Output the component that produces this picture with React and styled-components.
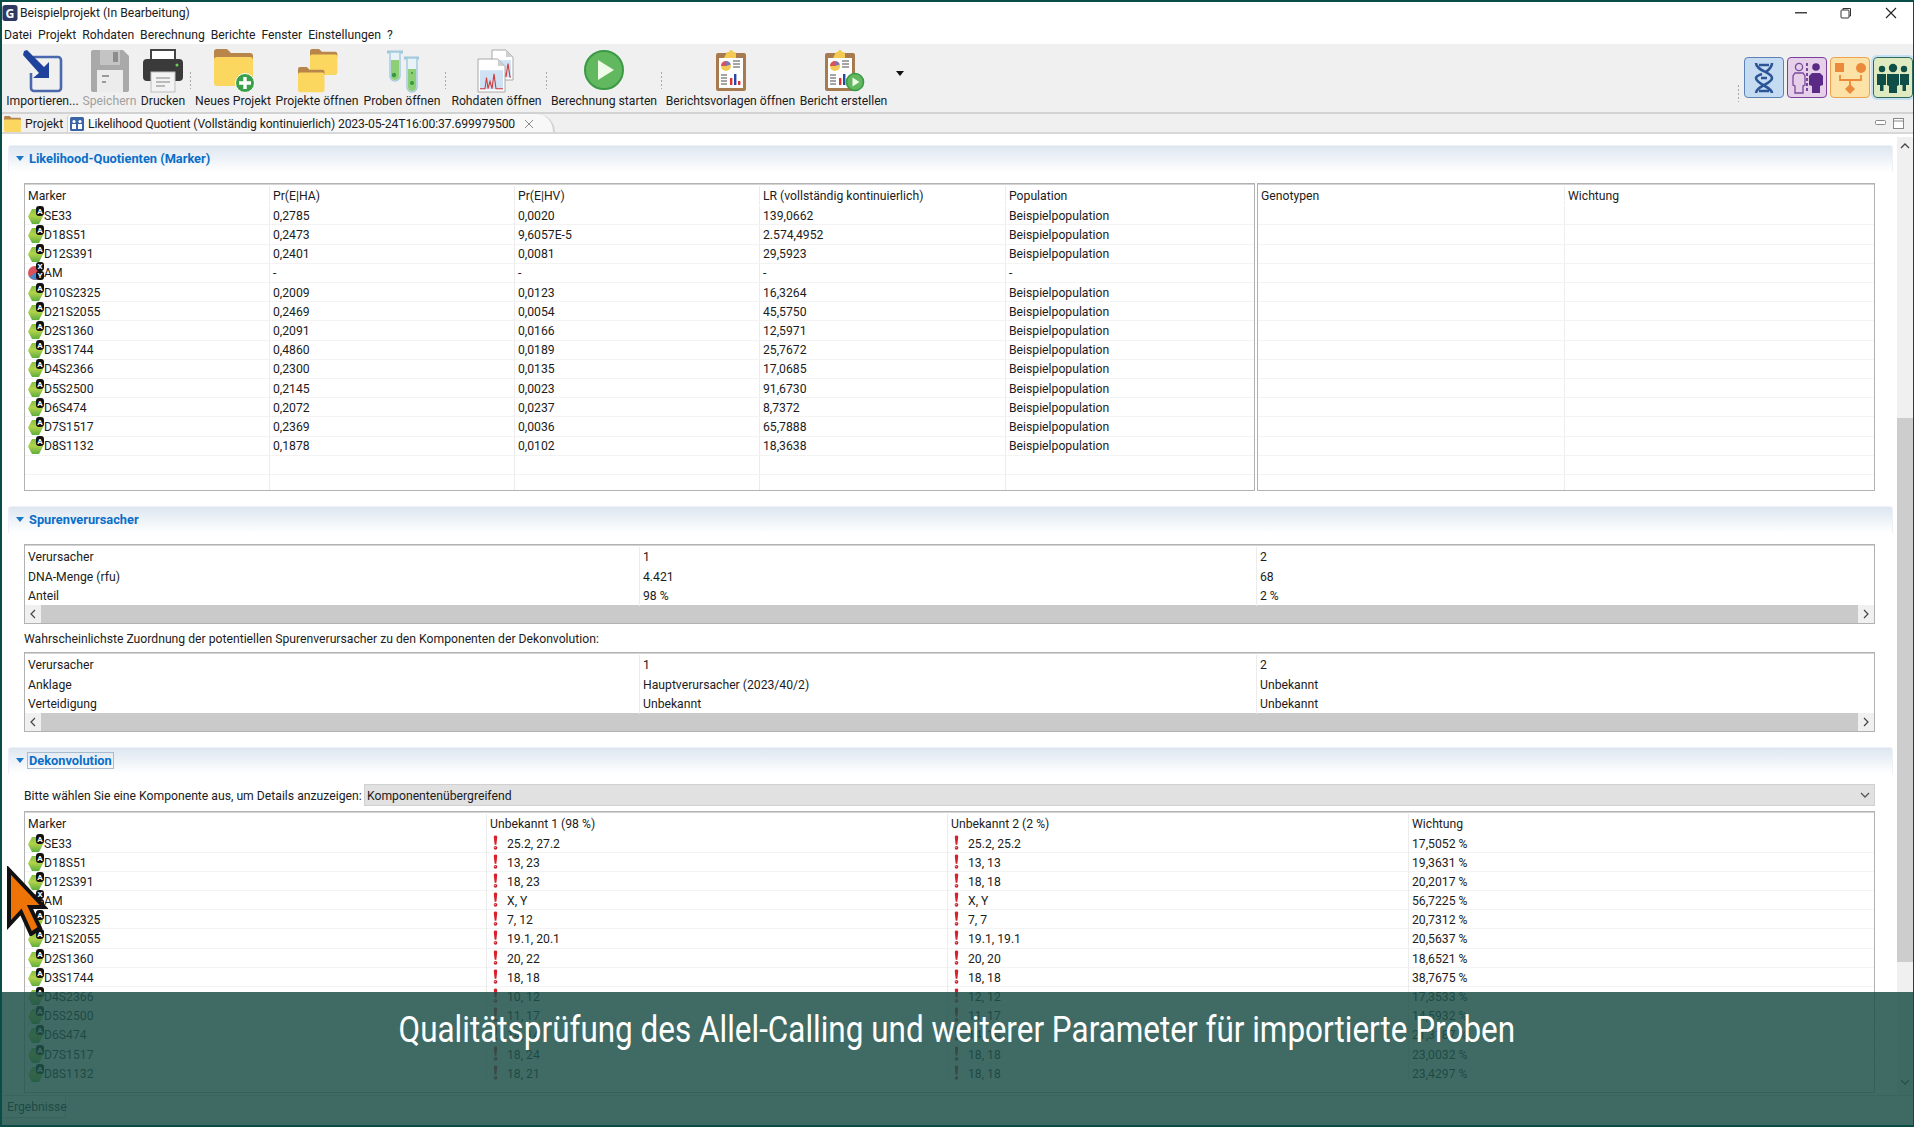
import React from "react";
import styled, { createGlobalStyle } from "styled-components";

const Global = createGlobalStyle`
  html, body { margin: 0; padding: 0; width: 1914px; height: 1127px; overflow: hidden; background: #fff; }
  #root { width: 1914px; height: 1127px; }
  * { box-sizing: border-box; }
`;

const Window = styled.div`
  position: relative;
  width: 1914px;
  height: 1127px;
  display: flex;
  flex-direction: column;
  border: solid #0a4d47;
  border-width: 2px 1px 2px 2px;
  font-family: Roboto, "Noto Sans", sans-serif;
  font-size: 12.2px;
  color: #1c1c1c;
  background: #fff;
  overflow: hidden;
`;

const TitleBar = styled.div`
  height: 22px;
  display: flex;
  align-items: center;
  gap: 2px;
  background: #fff;
`;

const TitleText = styled.span`
  flex: 1;
`;

const WinControls = styled.div`
  display: flex;
`;

const WinButton = styled.div`
  width: 45px;
  height: 22px;
  display: flex;
  align-items: center;
  justify-content: center;
`;

const MenuBar = styled.div`
  height: 20px;
  display: flex;
  align-items: center;
  gap: 6px;
  padding: 2px 0 0 2px;
`;

const Toolbar = styled.div`
  height: 68px;
  display: flex;
  padding-left: 2px;
  background: #f0f0f0;
`;

const ToolItem = styled.div`
  width: ${(p) => p.$w}px;
  display: flex;
  flex-direction: column;
  align-items: center;
  padding-top: 5px;
  white-space: nowrap;
  color: ${(p) => (p.$disabled ? "#a0a0a0" : "#1c1c1c")};
`;

const ToolIcon = styled.svg`
  width: 44px;
  height: 44px;
  margin-bottom: 1px;
`;

const Dots = styled.div`
  width: ${(p) => p.$w || 5}px;
  margin-top: 27px;
  height: 18px;
  background-image: radial-gradient(circle, #a8a8a8 0.9px, transparent 1.1px);
  background-size: 5px 4px;
  background-repeat: repeat-y;
`;

const DropArrow = styled.div`
  margin: 27px 0 0 6px;
  width: 0;
  height: 0;
  border-left: 4px solid transparent;
  border-right: 4px solid transparent;
  border-top: 5px solid #111;
`;

const Perspectives = styled.div`
  margin-left: auto;
  display: flex;
  align-items: flex-start;
  gap: 3px;
  padding-top: 13px;
`;

const PerspectiveButton = styled.div`
  width: 40px;
  height: 41px;
  border-radius: 4px;
  background: ${(p) => p.$bg};
  border: 1.5px solid ${(p) => p.$line};
  outline: ${(p) => (p.$active ? "2px solid #c5dff2" : "none")};
  display: flex;
  align-items: center;
  justify-content: center;
`;

const TabRow = styled.div`
  height: 22px;
  display: flex;
  align-items: stretch;
  background: #f0f0f0;
  border-top: 2px solid #d2d2d2;
  border-bottom: 2px solid #d8d8d8;
  white-space: nowrap;
`;

const PlainTab = styled.div`
  display: flex;
  align-items: center;
  gap: 4px;
  padding: 2px 4px 0 2px;
  width: 65px;
`;

const ActiveTab = styled.div`
  display: flex;
  align-items: center;
  gap: 4px;
  width: 488px;
  padding: 2px 0 0 2px;
  letter-spacing: -0.12px;
  background: #f8f8f8;
  border-left: 1px solid #d2d2d2;
  border-right: 2px solid #d2d2d2;
  border-radius: 5px 20px 0 0;
`;

const TabClose = styled.span`
  margin-left: 5px;
  display: flex;
`;

const TabTools = styled.div`
  margin-left: auto;
  display: flex;
  align-items: center;
  gap: 7px;
  padding-right: 9px;
`;

const Body = styled.div`
  flex: 1;
  min-height: 0;
  display: flex;
`;

const Content = styled.div`
  flex: 1;
  min-width: 0;
  padding: 11px 4px 0 6px;
  overflow: hidden;
`;

const MainScroll = styled.div`
  width: 16px;
  display: flex;
  flex-direction: column;
  background: #f0f0f0;
  margin-top: 3px;
`;

const ScrollEnd = styled.div`
  height: 16px;
  display: flex;
  align-items: center;
  justify-content: center;
`;

const ScrollGap = styled.div`
  height: ${(p) => p.$h}px;
`;

const ScrollThumb = styled.div`
  height: ${(p) => p.$h}px;
  background: #cdcdcd;
`;

const Section = styled.section`
  margin-bottom: 15px;
`;

const SectionHeader = styled.div`
  height: 27px;
  display: flex;
  align-items: center;
  gap: 3px;
  padding: 0 0 2px 7px;
  border: 1px solid #eef2f6;
  border-bottom: none;
  border-radius: 3px 3px 0 0;
  background: linear-gradient(#dde6f0, #fff);
`;

const Twistie = styled.div`
  width: 0;
  height: 0;
  border-left: 4px solid transparent;
  border-right: 4px solid transparent;
  border-top: 5px solid #1a78c8;
`;

const SectionTitle = styled.span`
  font-size: 12.8px;
  font-weight: 700;
  color: #0a6ec8;
  padding: 0 1px;
  border: 1px solid ${(p) => (p.$focused ? "#a9bccd" : "transparent")};
`;

const SectionBody = styled.div`
  margin: ${(p) => p.$top}px 18px 0 16px;
`;

const SplitTables = styled.div`
  display: flex;
  gap: 2px;
`;

const Table = styled.div`
  flex: ${(p) => p.$flex || "none"};
  width: ${(p) => (p.$w ? `${p.$w}px` : "auto")};
  height: ${(p) => p.$h}px;
  border: 1px solid #b2b2b2;
  box-shadow: inset 0 1px #d4d4d4;
  padding-top: 2px;
  overflow: hidden;
`;

const Row = styled.div`
  display: grid;
  grid-template-columns: ${(p) => p.$cols};
  height: ${(p) => p.$h || 19.2}px;
  padding-bottom: ${(p) => p.$pad || 0}px;
  border-bottom: ${(p) => (p.$h ? "none" : "1px solid #f3f3f3")};
`;

const Cell = styled.div`
  display: flex;
  align-items: center;
  padding: 1px 0 0 3px;
  border-right: 1px solid #ececec;
  white-space: nowrap;
  line-height: 16px;
  &:last-child { border-right: none; }
`;

const HScroll = styled.div`
  height: 19px;
  margin-top: -1px;
  display: flex;
  background: #cacaca;
`;

const HScrollEnd = styled.div`
  width: 16px;
  display: flex;
  align-items: center;
  justify-content: center;
  background: #f0f0f0;
`;

const HScrollThumb = styled.div`
  flex: 1;
`;

const Note = styled.div`
  margin: 6px 0 3px;
  height: 19px;
  line-height: 19px;
`;

const PickerRow = styled.div`
  display: flex;
  align-items: center;
  height: 22px;
  margin-bottom: 5px;
`;

const PickerLabel = styled.span`
  width: 340px;
  padding-top: 1px;
  white-space: nowrap;
`;

const Picker = styled.div`
  flex: 1;
  height: 22px;
  display: flex;
  align-items: center;
  justify-content: space-between;
  padding: 1px 4px 0 2px;
  background: #e1e1e1;
  border: 1px solid #d0d0d0;
`;

const BottomTabs = styled.div`
  height: 30px;
  border-top: 1px solid #d4d4d4;
  background: #f4f4f4;
`;

const BottomTab = styled.div`
  width: 64px;
  height: 22px;
  display: flex;
  align-items: center;
  padding-left: 5px;
  background: #fff;
  border-right: 1px solid #d0d0d0;
  border-bottom: 1px solid #d0d0d0;
  border-radius: 0 0 3px 0;
  white-space: nowrap;
`;

const Caption = styled.div`
  position: absolute;
  left: -2px;
  right: -1px;
  top: 990px;
  bottom: -2px;
  padding-top: 15px;
  background: rgba(30, 81, 74, 0.85);
  display: flex;
  justify-content: center;
`;

const CaptionText = styled.span`
  font-family: Roboto, "Noto Sans", sans-serif;
  font-size: 37px;
  line-height: 46px;
  color: #fff;
  white-space: nowrap;
  transform: scaleX(0.85);
  transform-origin: center top;
`;

const Cursor = styled.svg`
  position: absolute;
  left: 4px;
  top: 864px;
  width: 42px;
  height: 70px;
`;

const Exclaim = styled.svg`
  width: 7px;
  height: 16px;
  margin: 0 8px 2px 2px;
  flex: none;
`;

const MarkerSvg = styled.svg`
  width: 16px;
  height: 16px;
  flex: none;
  overflow: visible;
`;

const TabGlyph = styled.svg`
  flex: none;
`;

const ChevDown = () => (
  <svg width="10" height="7" viewBox="0 0 10 7"><path d="M1 1l4 4 4-4" fill="none" stroke="#555" strokeWidth="1.3" /></svg>
);
const ChevUp = () => (
  <svg width="10" height="7" viewBox="0 0 10 7"><path d="M1 6l4-4 4 4" fill="none" stroke="#444" strokeWidth="1.3" /></svg>
);
const ChevSide = ({ right }) => (
  <svg width="6" height="10" viewBox="0 0 6 10"><path d={right ? "M1 1l4 4-4 4" : "M5 1L1 5l4 4"} fill="none" stroke="#444" strokeWidth="1.2" /></svg>
);

const AppIcon = () => (
  <svg width="16" height="18" viewBox="0 0 17 18">
    <rect x="0.5" y="0.5" width="16" height="17" rx="3" fill="#2e3a63" />
    <text x="8.5" y="14" textAnchor="middle" fontSize="13" fontWeight="700" fill="#fff" fontFamily="Noto Sans">G</text>
  </svg>
);

const Badge = ({ y, h = 10, children }) => (
  <g>
    <rect x="8" y={y} width="8" height={h} rx="3" fill="#111" />
    <text x="12" y={y + h - 2} textAnchor="middle" fontSize="8" fontWeight="700" fill="#fff" fontFamily="Roboto">{children}</text>
  </g>
);

const MarkerIcon = ({ kind }) => (
  <MarkerSvg viewBox="0 0 16 16">
    <defs>
      <linearGradient id="mk" x1="0" y1="0" x2="0" y2="1">
        <stop offset="0" stopColor="#86bf3f" />
        <stop offset="0.45" stopColor="#b2d34a" />
        <stop offset="1" stopColor="#5fae3e" />
      </linearGradient>
    </defs>
    {kind === "xy" ? (
      <>
        <circle cx="7" cy="8" r="7" fill="#d9525a" />
        <path d="M1.5 12a7 7 0 0 0 11 0L7 8z" fill="#4a86cc" />
        <Badge y={-3} h={9}>X</Badge>
        <Badge y={6} h={9}>Y</Badge>
      </>
    ) : (
      <>
        <path d="M4 1h7l4 7.5-4 7.5H4L0 8.5z" fill="url(#mk)" />
        <Badge y={-2}>A</Badge>
      </>
    )}
  </MarkerSvg>
);

const Alert = () => (
  <Exclaim viewBox="0 0 8 17">
    <path d="M2 1.5a2 1.5 0 0 1 4 0L5 10.5H3z" fill="#d9202c" />
    <circle cx="4" cy="14" r="2.1" fill="#c9202c" />
    <circle cx="3.6" cy="13.6" r="0.8" fill="#eaa" />
  </Exclaim>
);

const ImportIcon = () => (
  <ToolIcon viewBox="0 0 44 44">
    <path d="M12 8h25a3 3 0 0 1 3 3v28a3 3 0 0 1-3 3H13a3 3 0 0 1-3-3V24" fill="none" stroke="#4a68ad" strokeWidth="2.6" />
    <path d="M3 2l3-1 17 17 5-5v16H12l6-5L2 6z" fill="#1f429c" />
  </ToolIcon>
);

const SaveIcon = () => (
  <ToolIcon viewBox="0 0 44 44">
    <path d="M3 3a2 2 0 0 1 2-2h30l6 6v34a2 2 0 0 1-2 2H5a2 2 0 0 1-2-2z" fill="#a9a9a9" />
    <rect x="12" y="1" width="20" height="15" fill="#c4c4c4" />
    <rect x="25" y="3" width="5" height="10" fill="#8d8d8d" />
    <rect x="9" y="21" width="26" height="22" fill="#ececec" />
    <path d="M14 27h7M14 33h4" stroke="#9a9a9a" strokeWidth="2" />
  </ToolIcon>
);

const PrintIcon = () => (
  <ToolIcon viewBox="0 0 44 44">
    <rect x="10" y="1" width="24" height="12" fill="#fff" stroke="#444" strokeWidth="2" />
    <rect x="2" y="10" width="40" height="22" rx="4" fill="#3a3a3a" />
    <circle cx="36" cy="16" r="1.5" fill="#6fce5a" />
    <rect x="10" y="23" width="24" height="20" fill="#f3f3f3" stroke="#bdbdbd" />
    <path d="M15 29h14M15 33h14M15 37h9" stroke="#a8a8a8" strokeWidth="1.6" />
  </ToolIcon>
);

const Folder = ({ x = 0, y = 0, s = 1 }) => (
  <g transform={`translate(${x} ${y}) scale(${s})`}>
    <path d="M0 3a3 3 0 0 1 3-3h10l4 4h19a3 3 0 0 1 3 3v4H0z" fill="#b8864b" />
    <rect x="0" y="8" width="39" height="29" rx="3" fill="#fbd75f" />
  </g>
);

const NewProjectIcon = () => (
  <ToolIcon viewBox="0 0 44 44">
    <Folder x="3" y="0" />
    <circle cx="34" cy="34" r="9.5" fill="#3aa14a" stroke="#fff" strokeWidth="1" />
    <path d="M34 28v12M28 34h12" stroke="#fff" strokeWidth="3.4" />
  </ToolIcon>
);

const OpenProjectsIcon = () => (
  <ToolIcon viewBox="0 0 44 44">
    <Folder x="15" y="0" s="0.7" />
    <Folder x="3" y="18" s="0.68" />
  </ToolIcon>
);

const TubesIcon = () => (
  <ToolIcon viewBox="0 0 44 44">
    <path d="M7 3h16M24 9h15" stroke="#9fc7dc" strokeWidth="3" />
    <path d="M10 3h10v24a5 5 0 0 1-10 0z" fill="#e7f3f8" stroke="#a6cbde" strokeWidth="1.5" />
    <path d="M27 9h10v29a5 5 0 0 1-10 0z" fill="#e7f3f8" stroke="#a6cbde" strokeWidth="1.5" />
    <path d="M11 11h8v16a4 4 0 0 1-8 0z" fill="#8dce77" />
    <path d="M28 20h8v18a4 4 0 0 1-8 0z" fill="#8dce77" />
    <circle cx="14" cy="26" r="2.2" fill="#2f9a3f" />
    <circle cx="32" cy="34" r="2" fill="#2f9a3f" />
    <circle cx="32" cy="24" r="1" fill="#2f9a3f" />
  </ToolIcon>
);

const Sheet = ({ x, y, w, h }) => (
  <g transform={`translate(${x} ${y})`}>
    <path d={`M0 0h${w - 7}l7 7v${h - 7}H0z`} fill="#fff" stroke="#a8a8a8" />
    <path d={`M${w - 7} 0v7h7z`} fill="#cfcfcf" />
    <rect x="2" y={h * 0.34} width={w - 4} height={h * 0.58} fill="#cfe2f3" />
    <path d={`M2 ${h * 0.9}h5l1.5-${h * 0.34} 1.5 ${h * 0.34} 2-${h * 0.22} 2 ${h * 0.22} 2-${h * 0.45} 2 ${h * 0.45}h${w - 20}`} fill="none" stroke="#cf3d3d" strokeWidth="1.1" />
  </g>
);

const RawDataIcon = () => (
  <ToolIcon viewBox="0 0 44 44">
    <Sheet x={17} y={1} w={21} h={30} />
    <Sheet x={3} y={10} w={27} h={33} />
  </ToolIcon>
);

const PlayIcon = () => (
  <ToolIcon viewBox="0 0 44 44">
    <circle cx="22" cy="21" r="19" fill="#62b85e" stroke="#3a9a45" strokeWidth="2" />
    <path d="M16 11l16 10-16 10z" fill="#eefbe6" />
  </ToolIcon>
);

const Clipboard = () => (
  <g>
    <rect x="7" y="4" width="30" height="38" rx="2" fill="#a87a50" />
    <rect x="10" y="9" width="24" height="30" fill="#fff" />
    <path d="M17 5a2 2 0 0 1 2-2h1a2 2 0 0 1 4 0h1a2 2 0 0 1 2 2v4H15z" fill="#f3cb52" />
    <circle cx="17" cy="17" r="5" fill="#f3cb52" />
    <path d="M17 17v-5a5 5 0 0 0-5 5z" fill="#d9525a" />
    <path d="M17 17v-5a5 5 0 0 1 4.8 3.5z" fill="#7d70bc" />
    <path d="M24 12h7M24 15h7M24 18h7M12 26h6M12 29h6M12 32h6M12 35h6" stroke="#888" strokeWidth="1.4" />
    <rect x="21" y="29" width="2.4" height="7" fill="#d33" />
    <rect x="25" y="25" width="2.4" height="11" fill="#2348a8" />
    <rect x="29" y="32" width="2.4" height="4" fill="#d33" />
  </g>
);

const ReportIcon = () => (
  <ToolIcon viewBox="0 0 44 44"><Clipboard /></ToolIcon>
);

const ReportRunIcon = () => (
  <ToolIcon viewBox="0 0 44 44">
    <g transform="translate(-4 0)"><Clipboard /></g>
    <circle cx="33" cy="33" r="8.5" fill="#62b85e" stroke="#3a9a45" strokeWidth="1.6" />
    <path d="M30.5 28.5l7 4.5-7 4.5z" fill="#eefbe6" />
  </ToolIcon>
);

const DnaGlyph = () => (
  <svg width="24" height="34" viewBox="0 0 24 34" fill="none" stroke="#2b5596" strokeWidth="2.6">
    <path d="M4 2c0 8 16 9 16 15S4 25 4 32" />
    <path d="M20 2c0 5-4 7-6 9M10 13c-3 1-6 2-6 4 0 6 16 9 16 15" />
    <path d="M7 4h10M9 17h6M7 30h10" />
  </svg>
);

const SplitGlyph = () => (
  <svg width="34" height="34" viewBox="0 0 34 34">
    <circle cx="9" cy="6" r="3.6" fill="none" stroke="#7a4a9c" strokeWidth="1.3" />
    <path d="M5 12h8l2 3v9l-2 1v7H5v-7l-2-1v-9z" fill="none" stroke="#7a4a9c" strokeWidth="1.3" />
    <path d="M17 2v30" stroke="#5b2a86" strokeWidth="1.6" strokeDasharray="3 2" />
    <circle cx="26" cy="6" r="3.8" fill="#5b2a86" />
    <path d="M22 12h8l3 3v9l-3 1v7h-8v-7l-3-1v-9z" fill="#5b2a86" />
  </svg>
);

const FlowGlyph = () => (
  <svg width="34" height="34" viewBox="0 0 34 34">
    <rect x="2" y="2" width="9" height="9" fill="#ea8a3a" />
    <circle cx="28" cy="7" r="5" fill="#ea8a3a" />
    <path d="M7 14v5h21v-5M17 19v6" fill="none" stroke="#ea8a3a" strokeWidth="1.8" />
    <path d="M17 23l5 5-5 5-5-5z" fill="#ea8a3a" />
  </svg>
);

const TeamGlyph = () => (
  <svg width="34" height="30" viewBox="0 0 34 30" fill="#0f4f47">
    <circle cx="6" cy="6" r="3.2" />
    <circle cx="28" cy="6" r="3.2" />
    <circle cx="17" cy="5" r="4.2" />
    <path d="M1 11h9v11H7.5v6H4v-6H1z" />
    <path d="M24 11h9v11h-3v6h-3.5v-6H24z" />
    <path d="M11 11h12v11l-2 1v7h-8v-7l-2-1z" />
  </svg>
);

const TabPeople = () => (
  <TabGlyph width="14" height="14" viewBox="0 0 14 14">
    <rect width="14" height="14" rx="1.5" fill="#3a63a8" />
    <circle cx="4" cy="4.5" r="1.6" fill="#fff" />
    <circle cx="10" cy="4.5" r="1.6" fill="#fff" />
    <path d="M2 7h4v5H2zM8 7h4v5H8z" fill="#fff" />
  </TabGlyph>
);

const TabFolder = () => (
  <TabGlyph width="17" height="16" viewBox="0 0 39 37"><Folder /></TabGlyph>
);

const markers = [
  ["SE33", "0,2785", "0,0020", "139,0662", "Beispielpopulation"],
  ["D18S51", "0,2473", "9,6057E-5", "2.574,4952", "Beispielpopulation"],
  ["D12S391", "0,2401", "0,0081", "29,5923", "Beispielpopulation"],
  ["AM", "-", "-", "-", "-"],
  ["D10S2325", "0,2009", "0,0123", "16,3264", "Beispielpopulation"],
  ["D21S2055", "0,2469", "0,0054", "45,5750", "Beispielpopulation"],
  ["D2S1360", "0,2091", "0,0166", "12,5971", "Beispielpopulation"],
  ["D3S1744", "0,4860", "0,0189", "25,7672", "Beispielpopulation"],
  ["D4S2366", "0,2300", "0,0135", "17,0685", "Beispielpopulation"],
  ["D5S2500", "0,2145", "0,0023", "91,6730", "Beispielpopulation"],
  ["D6S474", "0,2072", "0,0237", "8,7372", "Beispielpopulation"],
  ["D7S1517", "0,2369", "0,0036", "65,7888", "Beispielpopulation"],
  ["D8S1132", "0,1878", "0,0102", "18,3638", "Beispielpopulation"],
];

const deconvolution = [
  ["SE33", "25.2, 27.2", "25.2, 25.2", "17,5052 %"],
  ["D18S51", "13, 23", "13, 13", "19,3631 %"],
  ["D12S391", "18, 23", "18, 18", "20,2017 %"],
  ["AM", "X, Y", "X, Y", "56,7225 %"],
  ["D10S2325", "7, 12", "7, 7", "20,7312 %"],
  ["D21S2055", "19.1, 20.1", "19.1, 19.1", "20,5637 %"],
  ["D2S1360", "20, 22", "20, 20", "18,6521 %"],
  ["D3S1744", "18, 18", "18, 18", "38,7675 %"],
  ["D4S2366", "10, 12", "12, 12", "17,3533 %"],
  ["D5S2500", "11, 17", "11, 17", "14,5932 %"],
  ["D6S474", "14, 14", "14, 14", "21,3187 %"],
  ["D7S1517", "18, 24", "18, 18", "23,0032 %"],
  ["D8S1132", "18, 21", "18, 18", "23,4297 %"],
];

const tools = [
  { w: 77, label: "Importieren...", icon: <ImportIcon /> },
  { w: 57, label: "Speichern", icon: <SaveIcon />, disabled: true },
  { w: 50, label: "Drucken", icon: <PrintIcon /> },
  { sep: 5 },
  { w: 80, label: "Neues Projekt", icon: <NewProjectIcon /> },
  { w: 88, label: "Projekte öffnen", icon: <OpenProjectsIcon /> },
  { w: 82, label: "Proben öffnen", icon: <TubesIcon /> },
  { sep: 6 },
  { w: 95, label: "Rohdaten öffnen", icon: <RawDataIcon /> },
  { sep: 5 },
  { w: 110, label: "Berechnung starten", icon: <PlayIcon /> },
  { sep: 5 },
  { w: 133, label: "Berichtsvorlagen öffnen", icon: <ReportIcon /> },
  { w: 93, label: "Bericht erstellen", icon: <ReportRunIcon /> },
];

const COLS_MARKER = "245px 245px 245px 246px 1fr";
const COLS_GENO = "307px 1fr";
const COLS_TRACE = "615px 617px 1fr";
const COLS_DECON = "462px 461px 461px 1fr";

const MarkerName = ({ name }) => (
  <Cell>
    <MarkerIcon kind={name === "AM" ? "xy" : "a"} />
    {name}
  </Cell>
);

const TraceTable = ({ rows }) => (
  <Table $h={80}>
    {rows.map((r) => (
      <Row key={r[0]} $cols={COLS_TRACE} $h={19.5}>
        <Cell>{r[0]}</Cell>
        <Cell>{r[1]}</Cell>
        <Cell>{r[2]}</Cell>
      </Row>
    ))}
    <HScroll>
      <HScrollEnd><ChevSide /></HScrollEnd>
      <HScrollThumb />
      <HScrollEnd><ChevSide right /></HScrollEnd>
    </HScroll>
  </Table>
);

export default function App() {
  return (
    <Window>
      <Global />
      <TitleBar>
        <AppIcon />
        <TitleText>Beispielprojekt (In Bearbeitung)</TitleText>
        <WinControls>
          <WinButton><svg width="12" height="2"><rect width="12" height="1.5" fill="#444" /></svg></WinButton>
          <WinButton>
            <svg width="12" height="12" viewBox="0 0 12 12" fill="none" stroke="#333"><rect x="1" y="3" width="8" height="8" rx="1" /><path d="M3 3V1.5h7.5V9H9" /></svg>
          </WinButton>
          <WinButton>
            <svg width="12" height="12" viewBox="0 0 12 12" stroke="#222" strokeWidth="1.1"><path d="M1 1l10 10M11 1L1 11" /></svg>
          </WinButton>
        </WinControls>
      </TitleBar>
      <MenuBar>
        {["Datei", "Projekt", "Rohdaten", "Berechnung", "Berichte", "Fenster", "Einstellungen", "?"].map((m) => (
          <span key={m}>{m}</span>
        ))}
      </MenuBar>
      <Toolbar>
        {tools.map((t, i) =>
          t.sep ? (
            <Dots key={i} $w={t.sep} />
          ) : (
            <ToolItem key={t.label} $w={t.w} $disabled={t.disabled}>
              {t.icon}
              {t.label}
            </ToolItem>
          )
        )}
        <DropArrow />
        <Perspectives>
          <Dots $w={5} />
          <PerspectiveButton $bg="#c5dbf2" $line="#5b83b8"><DnaGlyph /></PerspectiveButton>
          <PerspectiveButton $bg="#e6cfe8" $line="#7a3f98"><SplitGlyph /></PerspectiveButton>
          <PerspectiveButton $bg="#fde2a8" $line="#eda24f"><FlowGlyph /></PerspectiveButton>
          <PerspectiveButton $bg="#dfeac0" $line="#2f6a5c" $active><TeamGlyph /></PerspectiveButton>
        </Perspectives>
      </Toolbar>
      <TabRow>
        <PlainTab><TabFolder />Projekt</PlainTab>
        <ActiveTab>
          <TabPeople />
          Likelihood Quotient (Vollständig kontinuierlich) 2023-05-24T16:00:37.699979500
          <TabClose>
            <svg width="10" height="10" viewBox="0 0 10 10" stroke="#888"><path d="M1 1l8 8M9 1L1 9" /></svg>
          </TabClose>
        </ActiveTab>
        <TabTools>
          <svg width="11" height="6"><rect x="0.5" y="0.5" width="10" height="4" rx="1" fill="#fff" stroke="#888" /></svg>
          <svg width="11" height="11"><rect x="0.5" y="0.5" width="10" height="10" fill="#fff" stroke="#888" /><path d="M0 3h11" stroke="#888" /></svg>
        </TabTools>
      </TabRow>
      <Body>
        <Content>
          <Section>
            <SectionHeader><Twistie /><SectionTitle>Likelihood-Quotienten (Marker)</SectionTitle></SectionHeader>
            <SectionBody $top={11}>
              <SplitTables>
                <Table $w={1231} $h={308}>
                  <Row $cols={COLS_MARKER} $h={20.3} $pad={1.5}>
                    {["Marker", "Pr(E|HA)", "Pr(E|HV)", "LR (vollständig kontinuierlich)", "Population"].map((h) => <Cell key={h}>{h}</Cell>)}
                  </Row>
                  {markers.map((m) => (
                    <Row key={m[0]} $cols={COLS_MARKER}>
                      <MarkerName name={m[0]} />
                      <Cell>{m[1]}</Cell>
                      <Cell>{m[2]}</Cell>
                      <Cell>{m[3]}</Cell>
                      <Cell>{m[4]}</Cell>
                    </Row>
                  ))}
                  {[0, 1].map((i) => (
                    <Row key={i} $cols={COLS_MARKER}>
                      <Cell /><Cell /><Cell /><Cell /><Cell />
                    </Row>
                  ))}
                </Table>
                <Table $flex="1" $h={308}>
                  <Row $cols={COLS_GENO} $h={20.3} $pad={1.5}>
                    <Cell>Genotypen</Cell>
                    <Cell>Wichtung</Cell>
                  </Row>
                  {Array.from({ length: 15 }).map((_, i) => (
                    <Row key={i} $cols={COLS_GENO}><Cell /><Cell /></Row>
                  ))}
                </Table>
              </SplitTables>
            </SectionBody>
          </Section>
          <Section>
            <SectionHeader><Twistie /><SectionTitle>Spurenverursacher</SectionTitle></SectionHeader>
            <SectionBody $top={11}>
              <TraceTable rows={[["Verursacher", "1", "2"], ["DNA-Menge (rfu)", "4.421", "68"], ["Anteil", "98 %", "2 %"]]} />
              <Note>Wahrscheinlichste Zuordnung der potentiellen Spurenverursacher zu den Komponenten der Dekonvolution:</Note>
              <TraceTable rows={[["Verursacher", "1", "2"], ["Anklage", "Hauptverursacher (2023/40/2)", "Unbekannt"], ["Verteidigung", "Unbekannt", "Unbekannt"]]} />
            </SectionBody>
          </Section>
          <Section>
            <SectionHeader><Twistie /><SectionTitle $focused>Dekonvolution</SectionTitle></SectionHeader>
            <SectionBody $top={10}>
              <PickerRow>
                <PickerLabel>Bitte wählen Sie eine Komponente aus, um Details anzuzeigen:</PickerLabel>
                <Picker>Komponentenübergreifend<ChevDown /></Picker>
              </PickerRow>
              <Table $h={282}>
                <Row $cols={COLS_DECON} $h={19.5}>
                  {["Marker", "Unbekannt 1 (98 %)", "Unbekannt 2 (2 %)", "Wichtung"].map((h) => <Cell key={h}>{h}</Cell>)}
                </Row>
                {deconvolution.map((d) => (
                  <Row key={d[0]} $cols={COLS_DECON}>
                    <MarkerName name={d[0]} />
                    <Cell><Alert />{d[1]}</Cell>
                    <Cell><Alert />{d[2]}</Cell>
                    <Cell>{d[3]}</Cell>
                  </Row>
                ))}
              </Table>
            </SectionBody>
          </Section>
        </Content>
        <MainScroll>
          <ScrollEnd><ChevUp /></ScrollEnd>
          <ScrollGap $h={265} />
          <ScrollThumb $h={544} />
          <ScrollGap $h={112} />
          <ScrollEnd><ChevDown /></ScrollEnd>
        </MainScroll>
      </Body>
      <BottomTabs>
        <BottomTab>Ergebnisse</BottomTab>
      </BottomTabs>
      <Cursor viewBox="0 0 42 70">
        <path d="M3 4v55l12-13 10 22 9-6-10-21h14z" fill="#ee7408" stroke="#111" strokeWidth="4" strokeLinejoin="miter" />
      </Cursor>
      <Caption>
        <CaptionText>Qualitätsprüfung des Allel-Calling und weiterer Parameter für importierte Proben</CaptionText>
      </Caption>
    </Window>
  );
}
